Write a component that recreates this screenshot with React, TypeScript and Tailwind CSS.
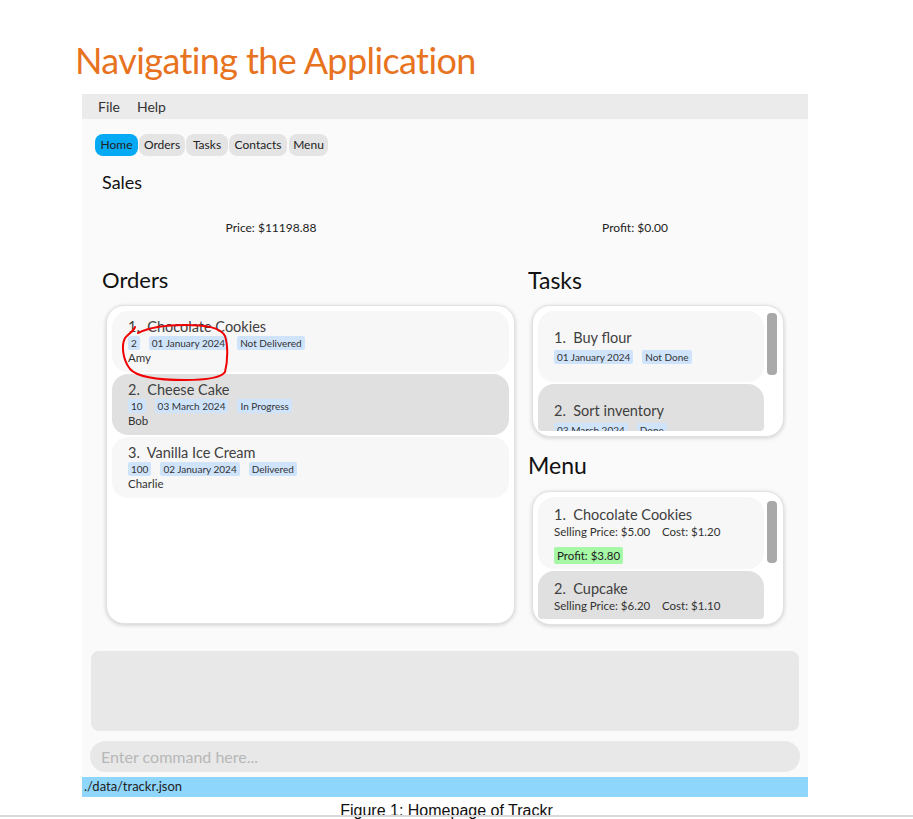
import React from "react";

const F = { fontFamily: "Lato, 'Noto Sans', sans-serif" };

function Tag({ children }: { children: React.ReactNode }) {
  return (
    <span className="bg-[#cfe4fb] text-[#333] text-[10px] leading-[14px] px-[3px] rounded-[2px]">{children}</span>
  );
}

function OrderItem({ n, title, qty, date, status, name, dark }: any) {
  return (
    <div className={`h-[61px] rounded-[16px] pl-[16px] pt-[7px] ${dark ? "bg-[#e0e0e0]" : "bg-[#f7f7f7]"}`}>
      <div className="text-[14.5px] leading-[18px] text-[#404040]">{n}.&nbsp; {title}</div>
      <div className="flex gap-[9px]">
        <Tag>{qty}</Tag>
        <Tag>{date}</Tag>
        <Tag>{status}</Tag>
      </div>
      <div className="text-[11.5px] leading-[15px] text-[#333] mt-[0px]">{name}</div>
    </div>
  );
}

export default function App() {
  return (
    <div className="w-[913px] h-[819px] bg-white relative overflow-hidden" style={F}>
      <h1 className="pl-[75px] pt-[36px] text-[36px] leading-[48px] tracking-[-0.6px] text-[#e8731f]" style={{ fontFamily: "Lato, sans-serif", fontWeight: 400, fontVariantLigatures: "none" }}>
        Navigating the Application
      </h1>
      <div className="ml-[82px] w-[726px] mt-[10px]">
        <div className="h-[25px] bg-[#ebebeb] flex items-center gap-[17px] pl-[16px] text-[14px] text-[#333]">
          <span>File</span>
          <span>Help</span>
        </div>
        <div className="bg-[#fafafa] h-[658px] flex flex-col">
          <div className="flex gap-[1px] mt-[15px] ml-[13px] text-[12px] text-[#222]">
            <div className="h-[22px] w-[43px] flex items-center justify-center rounded-[8px] bg-[#05a9f4]">Home</div>
            <div className="h-[22px] w-[46px] flex items-center justify-center rounded-[8px] bg-[#e4e4e4]">Orders</div>
            <div className="h-[22px] w-[42px] flex items-center justify-center rounded-[8px] bg-[#e4e4e4]">Tasks</div>
            <div className="h-[22px] w-[58px] flex items-center justify-center rounded-[8px] bg-[#e4e4e4]">Contacts</div>
            <div className="h-[22px] w-[39px] flex items-center justify-center rounded-[8px] bg-[#e4e4e4] ml-[1px]">Menu</div>
          </div>
          <div className="pl-[20px] mt-[14px] text-[18px] leading-[24px] text-[#111]">Sales</div>
          <div className="grid grid-cols-2 pl-[10px] pr-[0px] mt-[26px] text-[12px] leading-[16px] text-[#222]">
            <div className="text-center">Price: $11198.88</div>
            <div className="text-center pl-[12px]">Profit: $0.00</div>
          </div>
          <div className="flex pl-[20px] mt-[29px] gap-[13px]">
            <div className="w-[413px]">
              <div className="text-[22px] leading-[30px] text-[#111]">Orders</div>
              <div className="ml-[4px] mt-[10px] w-[409px] h-[319px] bg-white rounded-[18px] border border-[#e2e2e2] shadow-[0_1px_4px_rgba(0,0,0,0.18)] p-[5px] flex flex-col gap-[2px]">
                <OrderItem n={1} title="Chocolate Cookies" qty="2" date="01 January 2024" status="Not Delivered" name="Amy" />
                <OrderItem n={2} title="Cheese Cake" qty="10" date="03 March 2024" status="In Progress" name="Bob" dark />
                <OrderItem n={3} title="Vanilla Ice Cream" qty="100" date="02 January 2024" status="Delivered" name="Charlie" />
              </div>
            </div>
            <div className="w-[260px]">
              <div className="text-[23px] leading-[30px] text-[#111]">Tasks</div>
              <div className="ml-[4px] mt-[10px] w-[252px] h-[132px] bg-white rounded-[18px] border border-[#e2e2e2] shadow-[0_1px_4px_rgba(0,0,0,0.18)] p-[5px] flex gap-[3px] overflow-hidden">
                <div className="w-[226px] flex flex-col gap-[2px] overflow-hidden rounded-b-[4px]">
                  <div className="h-[71px] shrink-0 rounded-[16px] bg-[#f7f7f7] pl-[16px] pt-[18px]">
                    <div className="text-[14.5px] leading-[18px] text-[#404040]">1.&nbsp; Buy flour</div>
                    <div className="flex gap-[9px] mt-[3px]">
                      <Tag>01 January 2024</Tag>
                      <Tag>Not Done</Tag>
                    </div>
                  </div>
                  <div className="h-[71px] shrink-0 rounded-[16px] bg-[#e0e0e0] pl-[16px] pt-[18px]">
                    <div className="text-[14.5px] leading-[18px] text-[#404040]">2.&nbsp; Sort inventory</div>
                    <div className="flex gap-[9px] mt-[3px]">
                      <Tag>03 March 2024</Tag>
                      <Tag>Done</Tag>
                    </div>
                  </div>
                </div>
                <div className="w-[10px] h-[62px] mt-[2px] rounded-[4px] bg-[#a9a9a9]" />
              </div>
              <div className="text-[23px] leading-[30px] text-[#111] mt-[13px]">Menu</div>
              <div className="ml-[4px] mt-[11px] w-[252px] h-[134px] bg-white rounded-[18px] border border-[#e2e2e2] shadow-[0_1px_4px_rgba(0,0,0,0.18)] p-[5px] flex gap-[3px] overflow-hidden">
                <div className="w-[226px] flex flex-col gap-[2px] overflow-hidden rounded-b-[4px]">
                  <div className="h-[72px] shrink-0 rounded-[16px] bg-[#f7f7f7] pl-[16px] pt-[9px]">
                    <div className="text-[14.5px] leading-[18px] text-[#404040]">1.&nbsp; Chocolate Cookies</div>
                    <div className="text-[11.5px] leading-[15px] text-[#333]">Selling Price: $5.00&nbsp;&nbsp;&nbsp; Cost: $1.20</div>
                    <div className="mt-[3px]">
                      <span className="inline-block bg-[#a6f7a6] text-[11.5px] leading-[17px] px-[3px] rounded-[2px] text-[#222]">Profit: $3.80</span>
                    </div>
                  </div>
                  <div className="h-[72px] shrink-0 rounded-[16px] bg-[#e0e0e0] pl-[16px] pt-[9px]">
                    <div className="text-[14.5px] leading-[18px] text-[#404040]">2.&nbsp; Cupcake</div>
                    <div className="text-[11.5px] leading-[15px] text-[#333]">Selling Price: $6.20&nbsp;&nbsp;&nbsp; Cost: $1.10</div>
                    <div className="mt-[3px]">
                      <span className="inline-block bg-[#a6f7a6] text-[11.5px] leading-[17px] px-[3px] rounded-[2px] text-[#222]">Profit: $5.10</span>
                    </div>
                  </div>
                </div>
                <div className="w-[10px] h-[62px] mt-[4px] rounded-[4px] bg-[#a9a9a9]" />
              </div>
            </div>
          </div>
          <div className="ml-[9px] mt-[26px] w-[708px] h-[80px] rounded-[8px] bg-[#e8e8e8]" />
          <div className="ml-[8px] mt-[10px] w-[710px] h-[31px] rounded-full bg-[#e8e8e8] flex items-center pl-[11px] text-[16px] text-[#b7b7b7]">
            Enter command here...
          </div>
        </div>
        <div className="h-[20px] bg-[#8fd6fc] flex items-center pl-[2px] text-[13px] text-[#222]">./data/trackr.json</div>
      </div>
      <div className="text-center text-[16px] leading-[20px] mt-[4px] text-[#111] pr-[20px]" style={{ fontFamily: "'Liberation Sans', Arial, sans-serif" }}>
        Figure 1: Homepage of Trackr
      </div>
      <div className="absolute left-0 right-0 top-[815px] h-[2px] bg-[#d9d9d9]" />
      <svg className="absolute left-0 top-0 pointer-events-none" width="913" height="819">
        <path
          d="M135,327 C134,331 129,333 125,338 C121,346 123,360 130,369 C138,378 160,380 185,380 C205,380 221,378 225,372 C228,360 228,345 225,336 C220,327 205,325 185,325 C165,325 148,328 138,333"
          fill="none"
          stroke="#f00000"
          strokeWidth="2"
          strokeLinecap="round"
        />
      </svg>
    </div>
  );
}
